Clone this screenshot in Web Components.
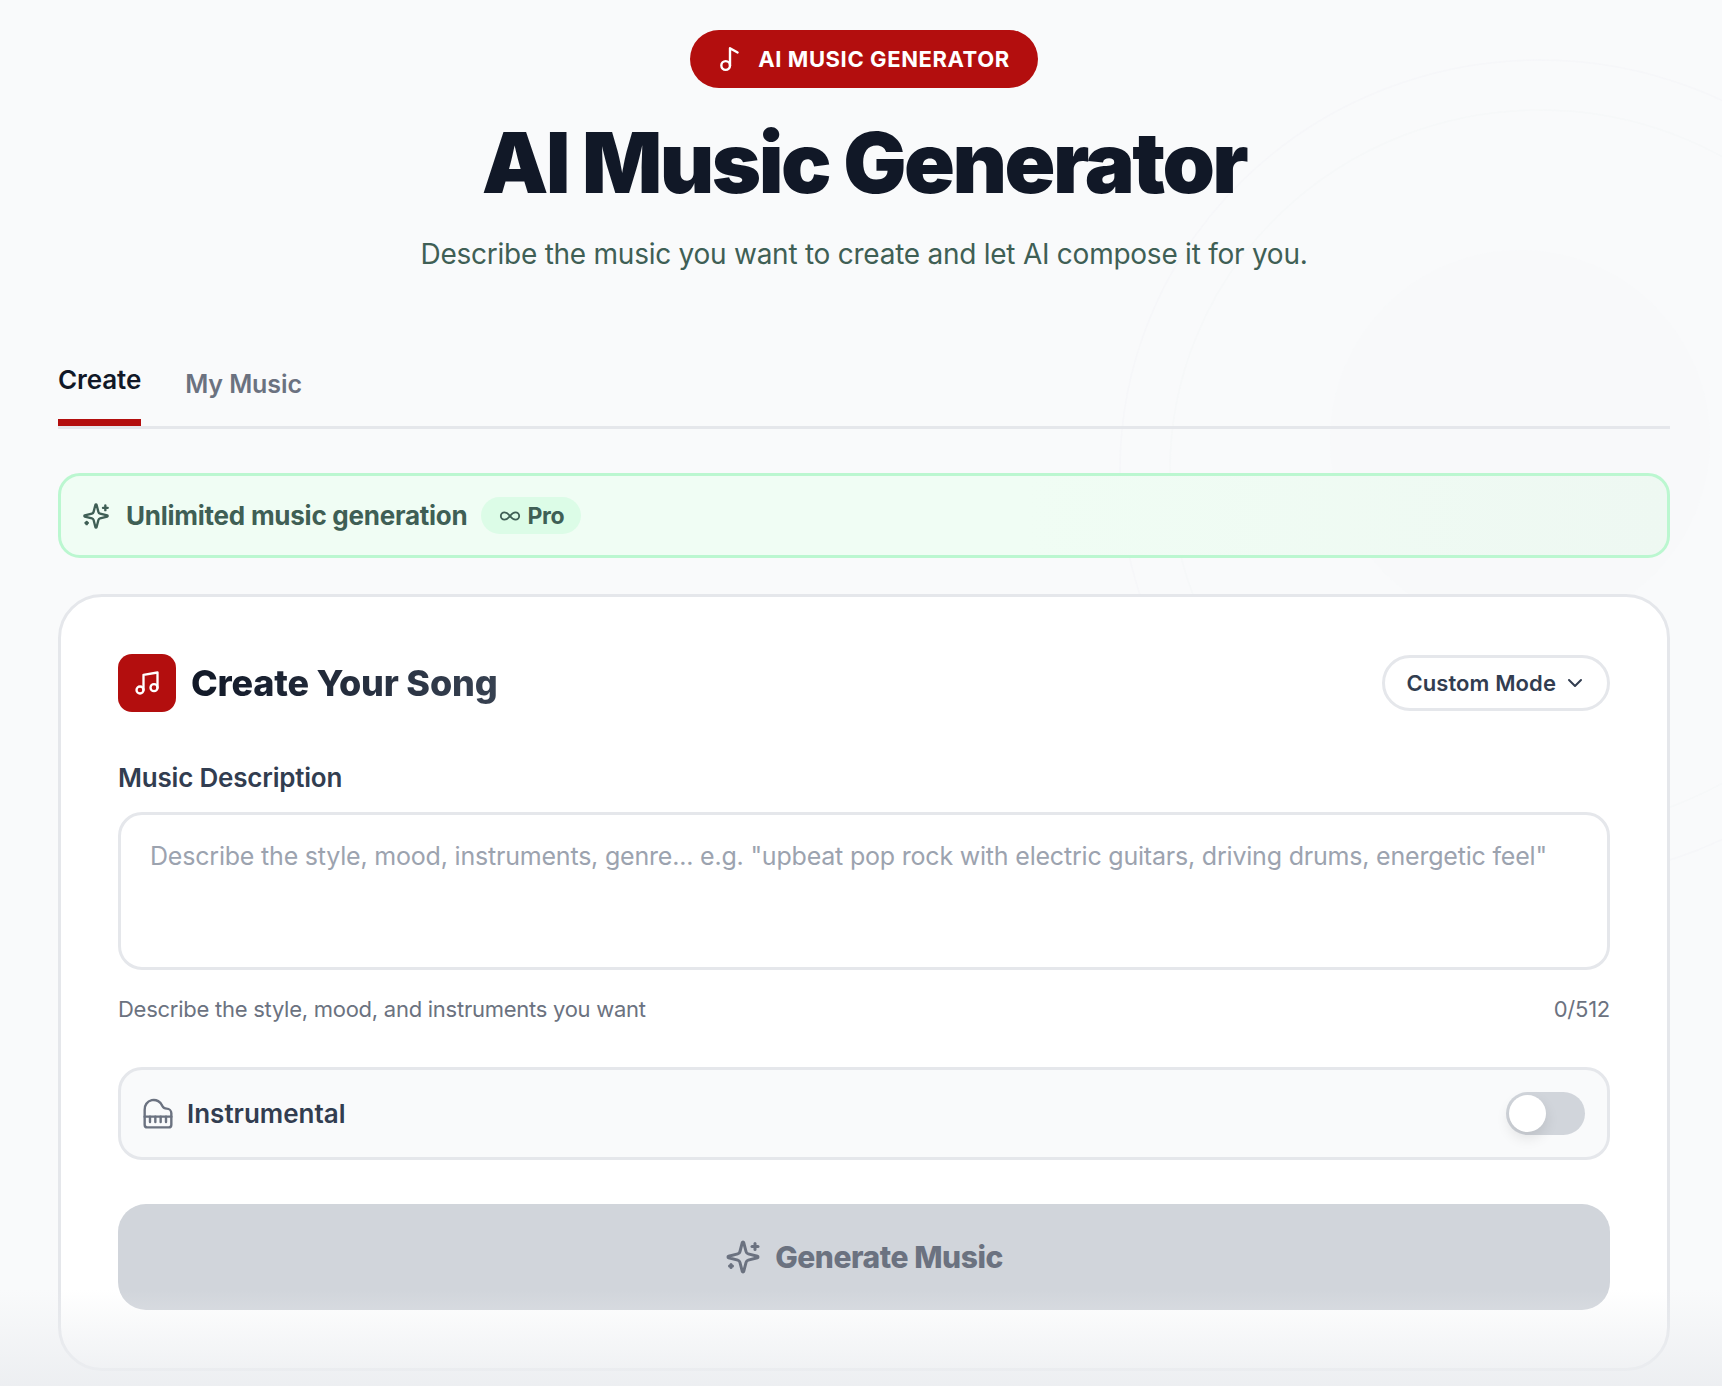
<!doctype html>
<html>
<head>
<meta charset="utf-8">
<title>AI Music Generator</title>
<style>
  html, body { margin: 0; padding: 0; height: 1386px; overflow: hidden; background: #f9fafb; }
  body { font-family: Inter, "Liberation Sans", sans-serif; }
</style>
</head>
<body>

<template id="page-template">
  <style>
    :host { display: block; position: relative; height: 1386px; overflow: hidden; box-sizing: border-box; padding: 30px 0 0 58px; background: #f9fafb; }
    #content { position: relative; width: 1612px; display: flex; flex-direction: column; }
    /* faint rings behind the page, and the fade along the bottom edge */
    #rings { position: absolute; left: 0; top: 0; width: 100%; height: 100%; }
    #fade { position: absolute; left: 0; right: 0; bottom: 0; height: 96px; background: linear-gradient(to bottom, rgba(236,238,241,0), rgba(236,238,241,.95)); }
  </style>
  <svg id="rings" viewBox="0 0 1722 1386" fill="none" stroke="#f1f2f5" stroke-width="1.5">
    <ellipse cx="1540" cy="470" rx="420" ry="410" opacity=".35"/>
    <ellipse cx="1540" cy="470" rx="370" ry="360" opacity=".25"/>
    <circle cx="1520" cy="440" r="190" fill="#f7f8fa" stroke="none" opacity=".6"/>
  </svg>
  <div id="content"><slot></slot></div>
  <div id="fade"></div>
</template>

<template id="hero-template">
  <style>
    :host { display: flex; flex-direction: column; align-items: center; }
    #badge { display: flex; align-items: center; gap: 15px; box-sizing: border-box; height: 58px; padding: 0 28px 0 27px; border-radius: 29px; background: #b30e0e; color: #fff; font-size: 22px; font-weight: 700; letter-spacing: .6px; }
    h1 { margin: 25px 0 0; color: #111827; font-size: 84px; line-height: 100px; font-weight: 900; letter-spacing: -2.55px; }
    p { margin: 20px 0 0; color: #3f5f55; font-size: 28px; line-height: 42px; font-weight: 400; letter-spacing: -.25px; }
  </style>
  <div id="badge"><ui-icon name="note" size="26" weight="2.2"></ui-icon><slot name="badge"></slot></div>
  <h1><slot name="title"></slot></h1>
  <p><slot name="sub"></slot></p>
</template>

<template id="tabs-template">
  <style>
    :host { display: flex; gap: 44px; margin-top: 67px; border-bottom: 3px solid #e5e7eb; height: 84px; box-sizing: content-box; align-items: stretch; }
  </style>
  <slot></slot>
</template>

<template id="tab-template">
  <style>
    :host { display: block; box-sizing: border-box; color: #6b7280; font-size: 25px; line-height: 32px; font-weight: 600; letter-spacing: -.1px; padding-top: 26px; }
    :host([active]) { color: #111827; font-size: 26px; padding-top: 22px; border-bottom: 7px solid #b30e0e; }
  </style>
  <slot></slot>
</template>

<template id="banner-template">
  <style>
    :host { display: flex; align-items: center; gap: 16px; box-sizing: border-box; height: 85px; margin-top: 44px; padding: 0 21px; border: 3px solid #bbf7d0; border-radius: 22px; background: linear-gradient(90deg, #f0fdf4, #f0fdf4 60%, #eef8f2); color: #3f5f55; font-size: 26px; font-weight: 700; letter-spacing: -.25px; }
    #pill { display: flex; align-items: center; gap: 6px; height: 37px; margin-left: -2px; padding: 0 17px 0 18px; border-radius: 19px; background: #dcfce7; font-size: 23px; letter-spacing: -.3px; }
  </style>
  <ui-icon name="sparkles" size="28" weight="2"></ui-icon>
  <slot></slot>
  <div id="pill"><ui-icon name="infinity" size="22" weight="2"></ui-icon><slot name="pill"></slot></div>
</template>

<template id="card-template">
  <style>
    :host { display: flex; flex-direction: column; box-sizing: border-box; height: 777px; margin-top: 36px; padding: 57px 57px 0; border: 3px solid #e5e7eb; border-radius: 44px; background: #fff; }
    #head { display: flex; align-items: center; justify-content: space-between; }
    #name { display: flex; align-items: center; gap: 15px; }
    #tile { display: flex; align-items: center; justify-content: center; width: 58px; height: 58px; border-radius: 14px; background: #b30e0e; color: #fff; }
    h2 { margin: 0; font-size: 36px; line-height: 44px; font-weight: 800; letter-spacing: -.2px; background: linear-gradient(90deg, #111827, #374151); -webkit-background-clip: text; background-clip: text; color: transparent; }
  </style>
  <div id="head">
    <div id="name"><div id="tile"><ui-icon name="music" size="28" weight="2"></ui-icon></div><h2><slot name="title"></slot></h2></div>
    <slot name="action"></slot>
  </div>
  <slot></slot>
</template>

<template id="mode-template">
  <style>
    :host { display: flex; align-items: center; gap: 7px; box-sizing: border-box; height: 56px; padding: 0 20px 0 21px; border: 3px solid #e5e7eb; border-radius: 28px; background: #fff; color: #323d50; font-size: 22px; font-weight: 600; letter-spacing: .1px; }
  </style>
  <slot></slot><ui-icon name="chevron" size="24" weight="2"></ui-icon>
</template>

<template id="field-template">
  <style>
    :host { display: flex; flex-direction: column; margin-top: 48px; }
    label { color: #323d50; font-size: 26px; line-height: 36px; font-weight: 600; letter-spacing: -.2px; }
    #box { box-sizing: border-box; height: 158px; margin-top: 16px; padding: 24px 29px; border: 3px solid #e5e7eb; border-radius: 24px; color: #9ca3af; font-size: 25px; line-height: 34px; letter-spacing: -.2px; white-space: nowrap; }
    #foot { display: flex; justify-content: space-between; margin-top: 25px; color: #6b7280; font-size: 22px; line-height: 28px; letter-spacing: -.26px; }
  </style>
  <label><slot name="label"></slot></label>
  <div id="box"><slot name="placeholder"></slot></div>
  <div id="foot"><slot name="hint"></slot><slot name="count"></slot></div>
</template>

<template id="switch-template">
  <style>
    :host { display: flex; align-items: center; gap: 13px; box-sizing: border-box; height: 93px; margin-top: 44px; padding: 0 22px 0 21px; border: 3px solid #e5e7eb; border-radius: 24px; background: #f9fafb; color: #323d50; font-size: 26px; font-weight: 600; }
    #label { flex: 1; }
    ui-icon { color: #6b7280; }
    #track { position: relative; width: 79px; height: 43px; border-radius: 22px; background: #d1d5db; }
    /* the thumb lies over the track */
    #thumb { position: absolute; left: 3px; top: 3px; width: 37px; height: 37px; border-radius: 50%; background: #fff; box-shadow: 0 6px 14px rgba(0,0,0,.1); }
  </style>
  <ui-icon name="piano" size="32" weight="1.8"></ui-icon>
  <div id="label"><slot></slot></div>
  <div id="track"><div id="thumb"></div></div>
</template>

<template id="generate-template">
  <style>
    :host { display: flex; align-items: center; justify-content: center; gap: 14px; box-sizing: border-box; height: 106px; margin-top: 44px; border-radius: 28px; background: #d1d5db; color: #6b7280; font-size: 30px; font-weight: 800; letter-spacing: -.45px; }
  </style>
  <ui-icon name="sparkles" size="36" weight="2"></ui-icon><slot></slot>
</template>

<ui-page>
  <ui-hero>
    <span slot="badge">AI MUSIC GENERATOR</span>
    <span slot="title">AI Music Generator</span>
    <span slot="sub">Describe the music you want to create and let AI compose it for you.</span>
  </ui-hero>
  <ui-tabs>
    <ui-tab active>Create</ui-tab>
    <ui-tab>My Music</ui-tab>
  </ui-tabs>
  <ui-banner>
    Unlimited music generation
    <span slot="pill">Pro</span>
  </ui-banner>
  <ui-card>
    <span slot="title">Create Your Song</span>
    <ui-mode slot="action">Custom Mode</ui-mode>
    <ui-field>
      <span slot="label">Music Description</span>
      <span slot="placeholder">Describe the style, mood, instruments, genre... e.g. "upbeat pop rock with electric guitars, driving drums, energetic feel"</span>
      <span slot="hint">Describe the style, mood, and instruments you want</span>
      <span slot="count">0/512</span>
    </ui-field>
    <ui-switch>Instrumental</ui-switch>
    <ui-generate>Generate Music</ui-generate>
  </ui-card>
</ui-page>

<script>
  const ICONS = {
    note: '<circle cx="8" cy="18" r="4"/><path d="M12 18V2l7 4"/>',
    music: '<path d="M9 18V5l12-2v13"/><circle cx="6" cy="18" r="3"/><circle cx="18" cy="16" r="3"/>',
    sparkles: '<path d="M9.937 15.5A2 2 0 0 0 8.5 14.063l-6.135-1.582a.5.5 0 0 1 0-.962L8.5 9.936A2 2 0 0 0 9.937 8.5l1.582-6.135a.5.5 0 0 1 .963 0L14.063 8.5A2 2 0 0 0 15.5 9.937l6.135 1.581a.5.5 0 0 1 0 .964L15.5 14.063a2 2 0 0 0-1.437 1.437l-1.582 6.135a.5.5 0 0 1-.963 0z"/><path d="M20 3v4"/><path d="M22 5h-4"/><path d="M4 17v2"/><path d="M5 18H3"/>',
    infinity: '<path d="M12 12c-2-2.67-4-4-6-4a4 4 0 1 0 0 8c2 0 4-1.33 6-4Zm0 0c2 2.67 4 4 6 4a4 4 0 0 0 0-8c-2 0-4 1.33-6 4Z"/>',
    chevron: '<path d="m6 9 6 6 6-6"/>',
    piano: '<path d="M18.5 8c-1.4 0-2.6-.8-3.2-2A6.87 6.87 0 0 0 2 9v11a2 2 0 0 0 2 2h16a2 2 0 0 0 2-2v-8.5C22 9.6 20.4 8 18.5 8"/><path d="M2 14h20"/><path d="M6 14v4"/><path d="M10 14v4"/><path d="M14 14v4"/><path d="M18 14v4"/>'
  };

  customElements.define('ui-icon', class extends HTMLElement {
    connectedCallback() {
      const size = this.getAttribute('size') || 24;
      const weight = this.getAttribute('weight') || 2;
      let shadowRoot = this.attachShadow({mode: 'open'});
      shadowRoot.innerHTML = `<style>:host { display: flex; flex: none; } svg { display: block; }</style>
        <svg width="${size}" height="${size}" viewBox="0 0 24 24" fill="none" stroke="currentColor"
             stroke-width="${weight}" stroke-linecap="round" stroke-linejoin="round">${ICONS[this.getAttribute('name')]}</svg>`;
    }
  });

  // every other element is just its template in a shadow root
  const parts = {
    'ui-page': 'page-template',
    'ui-hero': 'hero-template',
    'ui-tabs': 'tabs-template',
    'ui-tab': 'tab-template',
    'ui-banner': 'banner-template',
    'ui-card': 'card-template',
    'ui-mode': 'mode-template',
    'ui-field': 'field-template',
    'ui-switch': 'switch-template',
    'ui-generate': 'generate-template'
  };

  for (const [tag, id] of Object.entries(parts)) {
    customElements.define(tag, class extends HTMLElement {
      constructor() {
        super();
        const template = document.getElementById(id);
        let shadowRoot = this.attachShadow({mode: 'open'});
        shadowRoot.appendChild(template.content.cloneNode(true));
      }
    });
  }
</script>
</body>
</html>
